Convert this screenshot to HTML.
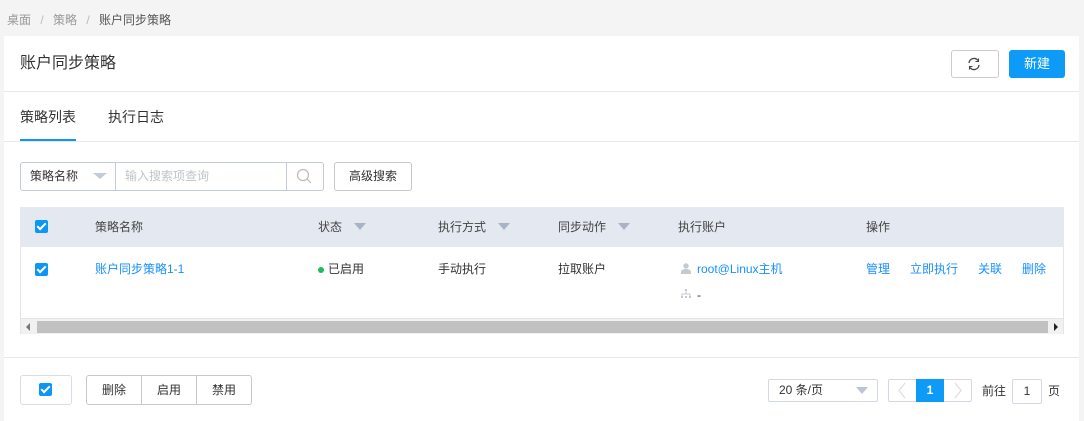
<html><head><style>
body{margin:0;width:1084px;height:421px;background:#f4f4f5;font-family:"Liberation Sans","Noto Sans CJK SC",sans-serif;position:relative;overflow:hidden;color:#333}
.a{position:absolute}
.t{font-size:12px;line-height:16px}
.cb{position:absolute;width:13px;height:13px;background:#0c96f5;border-radius:2px}
.cb:after{content:"";position:absolute;left:4px;top:1px;width:3px;height:7px;border:solid #fff;border-width:0 2px 2px 0;transform:rotate(45deg)}
.lnk{color:#1890ff}
.tri{position:absolute;width:0;height:0;border-left:6px solid transparent;border-right:6px solid transparent;border-top:7px solid #a8b4c4}
</style></head><body>
<div class="a t" style="left:7px;top:12px;color:#999">桌面 <span style="color:#bbb;margin:0 6px">/</span> 策略 <span style="color:#bbb;margin:0 6px">/</span> <span style="color:#555">账户同步策略</span></div>
<div class="a" style="left:4px;top:36px;width:1075px;height:385px;background:#fff"></div>
<div class="a" style="left:20px;top:54px;font-size:16px;line-height:20px;color:#333">账户同步策略</div>
<div class="a" style="left:951px;top:50px;width:46px;height:26px;border:1px solid #ccc;border-radius:3px"></div>
<svg class="a" style="left:967px;top:57px" width="14" height="14" viewBox="0 0 14 14"><path d="M2 6A5 5 0 0 1 11 3.5M12 8A5 5 0 0 1 3 10.5" fill="none" stroke="#444" stroke-width="1.3"/><path d="M11.5 1.5v3h-3M2.5 12.5v-3h3" fill="none" stroke="#444" stroke-width="1.1"/></svg>
<div class="a" style="left:1009px;top:50px;width:56px;height:28px;background:#0d9bf7;border-radius:3px;color:#fff;font-size:13px;line-height:28px;text-align:center">新建</div>
<div class="a" style="left:4px;top:91px;width:1075px;height:1px;background:#e8e8e8"></div>
<div class="a" style="left:20px;top:108px;font-size:14px;line-height:18px">策略列表</div>
<div class="a" style="left:108px;top:108px;font-size:14px;line-height:18px">执行日志</div>
<div class="a" style="left:20px;top:139px;width:56px;height:2px;background:#0d96f2"></div>
<div class="a" style="left:4px;top:141px;width:1075px;height:1px;background:#e8e8e8"></div>
<div class="a" style="left:20px;top:162px;width:302px;height:27px;border:1px solid #c3cbd6;border-radius:3px"></div>
<div class="a" style="left:115px;top:163px;width:1px;height:27px;background:#c3cbd6"></div>
<div class="a" style="left:286px;top:163px;width:1px;height:27px;background:#c3cbd6"></div>
<div class="a t" style="left:30px;top:168px">策略名称</div>
<div class="tri" style="left:93px;top:173px;border-width:6px 7px 0;border-top-color:#c3cbd6"></div>
<div class="a t" style="left:125px;top:168px;color:#c0c4cc">输入搜索项查询</div>
<svg class="a" style="left:296px;top:168px" width="16" height="16"><circle cx="7" cy="7" r="5.5" fill="none" stroke="#bbb" stroke-width="1.2"/><path d="M11 11l4 4" stroke="#bbb" stroke-width="1.2"/></svg>
<div class="a t" style="left:334px;top:162px;width:76px;height:27px;border:1px solid #c8c8c8;border-radius:3px;line-height:27px;text-align:center">高级搜索</div>
<div class="a" style="left:20px;top:207px;width:1044px;height:127px;border:1px solid #e2e6ec;box-sizing:border-box"></div>
<div class="a" style="left:20px;top:207px;width:1044px;height:40px;background:#e4e9f1"></div>
<div class="cb" style="left:35px;top:220px"></div>
<div class="a t" style="left:95px;top:219px;color:#444">策略名称</div>
<div class="a t" style="left:318px;top:219px;color:#444">状态</div><div class="tri" style="left:354px;top:223px"></div>
<div class="a t" style="left:438px;top:219px;color:#444">执行方式</div><div class="tri" style="left:498px;top:223px"></div>
<div class="a t" style="left:558px;top:219px;color:#444">同步动作</div><div class="tri" style="left:618px;top:223px"></div>
<div class="a t" style="left:678px;top:219px;color:#444">执行账户</div>
<div class="a t" style="left:866px;top:219px;color:#444">操作</div>
<div class="cb" style="left:35px;top:263px"></div>
<div class="a t lnk" style="left:95px;top:261px">账户同步策略1-1</div>
<div class="a" style="left:318px;top:267px;width:6px;height:6px;border-radius:50%;background:#19c05a"></div>
<div class="a t" style="left:328px;top:261px">已启用</div>
<div class="a t" style="left:438px;top:261px">手动执行</div>
<div class="a t" style="left:558px;top:261px">拉取账户</div>
<svg class="a" style="left:681px;top:263px" width="10" height="11"><circle cx="5" cy="3" r="2.7" fill="#c5c9d0"/><path d="M0 11v-2q0-3 5-3t5 3v2z" fill="#c5c9d0"/></svg>
<div class="a t lnk" style="left:697px;top:261px">root@Linux主机</div>
<svg class="a" style="left:681px;top:289px" width="10" height="9"><rect x="4" y="0" width="2" height="2" fill="#c5c9d0"/><path d="M5 2v3M1 7V5h8v2" stroke="#c5c9d0" fill="none"/><rect x="0" y="7" width="2" height="2" fill="#c5c9d0"/><rect x="4" y="7" width="2" height="2" fill="#c5c9d0"/><rect x="8" y="7" width="2" height="2" fill="#c5c9d0"/></svg>
<div class="a t" style="left:697px;top:287px">-</div>
<div class="a t lnk" style="left:866px;top:261px">管理</div>
<div class="a t lnk" style="left:910px;top:261px">立即执行</div>
<div class="a t lnk" style="left:978px;top:261px">关联</div>
<div class="a t lnk" style="left:1022px;top:261px">删除</div>
<div class="a" style="left:21px;top:318px;width:1042px;height:15px;background:#f1f1f1;border-top:1px solid #e2e6ec"></div>
<div class="a" style="left:37px;top:321px;width:1011px;height:12px;background:#c1c1c1"></div>
<div class="a" style="left:26px;top:323px;border:4px solid transparent;border-right-color:#777;border-left:0"></div>
<div class="a" style="left:1054px;top:323px;border:4px solid transparent;border-left-color:#222;border-right:0"></div>
<div class="a" style="left:4px;top:357px;width:1075px;height:1px;background:#e8e8e8"></div>
<div class="a" style="left:20px;top:375px;width:50px;height:28px;border:1px solid #d8dde6;border-radius:3px"></div>
<div class="cb" style="left:39px;top:383px"></div>
<div class="a" style="left:86px;top:375px;width:164px;height:28px;border:1px solid #c8c8c8;border-radius:3px"></div>
<div class="a" style="left:141px;top:376px;width:1px;height:28px;background:#c8c8c8"></div>
<div class="a" style="left:196px;top:376px;width:1px;height:28px;background:#c8c8c8"></div>
<div class="a t" style="left:86px;top:382px;width:56px;text-align:center">删除</div>
<div class="a t" style="left:141px;top:382px;width:56px;text-align:center">启用</div>
<div class="a t" style="left:196px;top:382px;width:56px;text-align:center">禁用</div>
<div class="a" style="left:768px;top:379px;width:108px;height:21px;border:1px solid #d3d9e3;border-radius:2px"></div>
<div class="a t" style="left:779px;top:382px">20 条/页</div>
<div class="tri" style="left:856px;top:387px;border-top-color:#bcc5d2"></div>
<div class="a" style="left:888px;top:379px;width:82px;height:21px;border:1px solid #d3d9e3;border-radius:2px"></div>
<div class="a t" style="left:916px;top:379px;width:28px;height:23px;background:#0d9bf7;color:#fff;line-height:23px;text-align:center;font-weight:bold">1</div>
<svg class="a" style="left:897px;top:382px" width="10" height="17"><path d="M8 1L2 8.5 8 16" fill="none" stroke="#ddd" stroke-width="1.2"/></svg>
<svg class="a" style="left:953px;top:382px" width="10" height="17"><path d="M2 1l6 7.5L2 16" fill="none" stroke="#ddd" stroke-width="1.2"/></svg>
<div class="a t" style="left:982px;top:383px">前往</div>
<div class="a t" style="left:1012px;top:379px;width:28px;height:23px;border:1px solid #d3d9e3;border-radius:2px;line-height:23px;text-align:center">1</div>
<div class="a t" style="left:1048px;top:383px">页</div>
</body></html>
